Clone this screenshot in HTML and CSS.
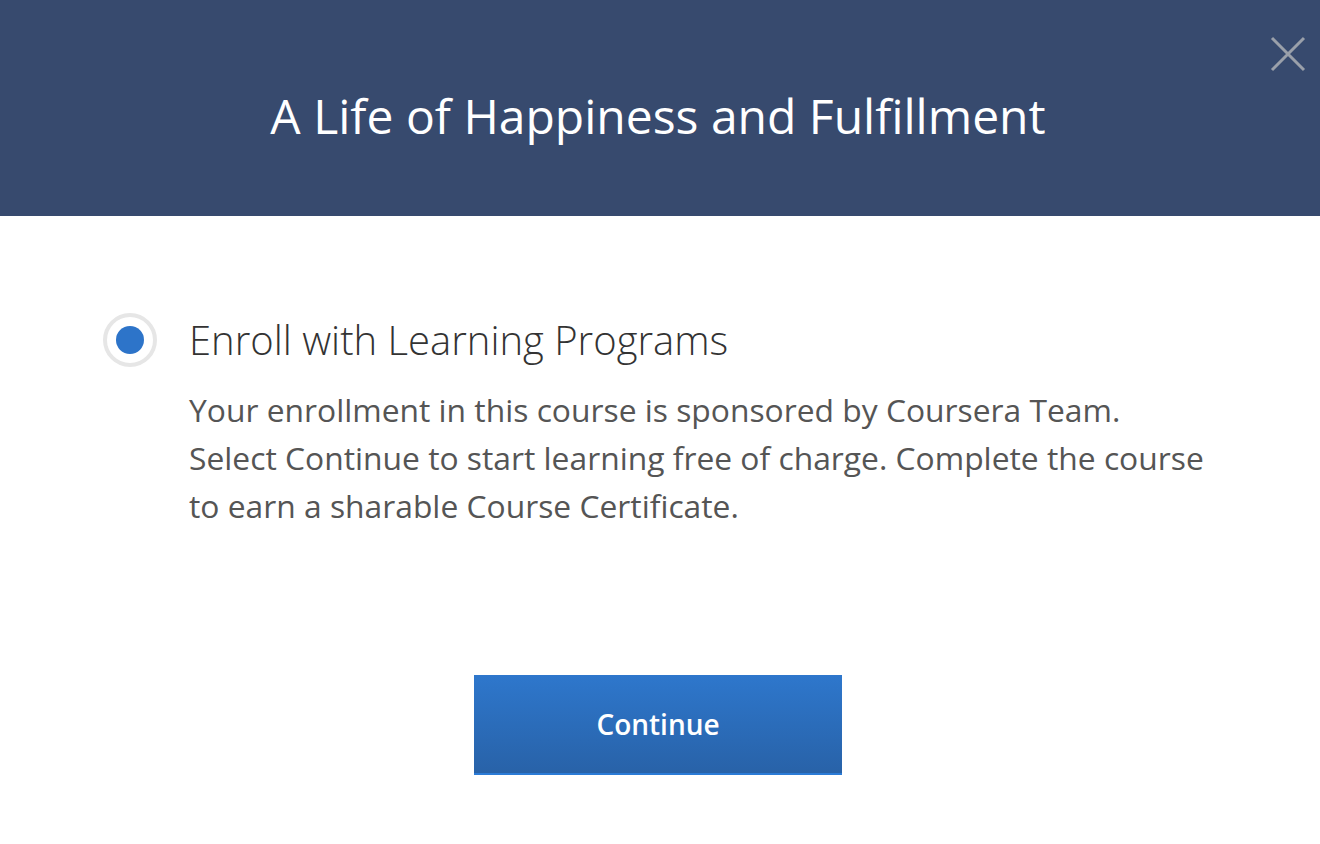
FILE: index.html
```html
<!DOCTYPE html>
<html lang="en">
<head>
    <meta charset="UTF-8">
    <meta name="viewport" content="width=device-width, initial-scale=1.0">
    <title>Enroll</title>
    <link rel="stylesheet" href="styles.css">
</head>
<body>
    <div class="modal">
        <header class="modal-header">
            <h1>A Life of Happiness and Fulfillment</h1>
            <button class="close" type="button" aria-label="Close">
                <svg width="36" height="36" viewBox="0 0 36 36">
                    <path d="M2 2 L34 34 M34 2 L2 34" stroke="#9aa0aa" stroke-width="3" fill="none"/>
                </svg>
            </button>
        </header>

        <main class="modal-body">
            <div class="option">
                <span class="radio"><span class="radio-dot"></span></span>
                <div class="option-text">
                    <h2>Enroll with Learning Programs</h2>
                    <p>Your enrollment in this course is sponsored by Coursera Team.<br>
                    Select Continue to start learning free of charge. Complete the course to earn a sharable Course Certificate.</p>
                </div>
            </div>

            <div class="actions">
                <button class="continue" type="button">Continue</button>
            </div>
        </main>
    </div>
</body>
</html>
```

FILE: styles.css
```css
body {
    margin: 0;
    background-color: #ffffff;
    font-family: "Open Sans", Arial, sans-serif;
    color: #333333;
}

.modal-header {
    position: relative;
    height: 216px;
    box-sizing: border-box;
    padding-top: 14px;
    padding-right: 4px;
    background-color: #374a6e; /* azul escuro */
    display: flex;
    align-items: center;
    justify-content: center;
}

.modal-header h1 {
    margin: 0;
    color: #ffffff;
    font-size: 48px;
    font-weight: 400;
}

.close {
    position: absolute;
    top: 36px;
    right: 14px;
    padding: 0;
    border: none;
    background: none;
    cursor: pointer;
    line-height: 0;
}

.modal-body {
    padding-top: 96px;
}

.option {
    display: flex;
    gap: 32px;
    padding-left: 103px;
}

.radio {
    flex: none;
    width: 46px;
    height: 46px;
    margin-top: 1px;
    border: 4px solid #e6e6e6;
    border-radius: 50%;
    display: flex;
    align-items: center;
    justify-content: center;
}

.radio-dot {
    width: 28px;
    height: 28px;
    border-radius: 50%;
    background-color: #2d74c9;
}

.option-text h2 {
    margin: 0;
    font-size: 40px;
    font-weight: 300;
    line-height: 56px;
    color: #333333;
}

.option-text p {
    margin: 18px 0 0;
    width: 1032px;
    font-size: 31.8px;
    line-height: 48px;
    color: #555555;
}

.actions {
    display: flex;
    justify-content: center;
    margin-top: 145px;
    padding-right: 4px;
}

.continue {
    width: 368px;
    height: 100px;
    border: none;
    border-bottom: 2px solid #2b7bd6;
    background: linear-gradient(#2e77cc, #2862a8);
    color: #ffffff;
    font-family: "Open Sans", Arial, sans-serif;
    font-size: 28px;
    font-weight: 600;
    cursor: pointer;
}
```
